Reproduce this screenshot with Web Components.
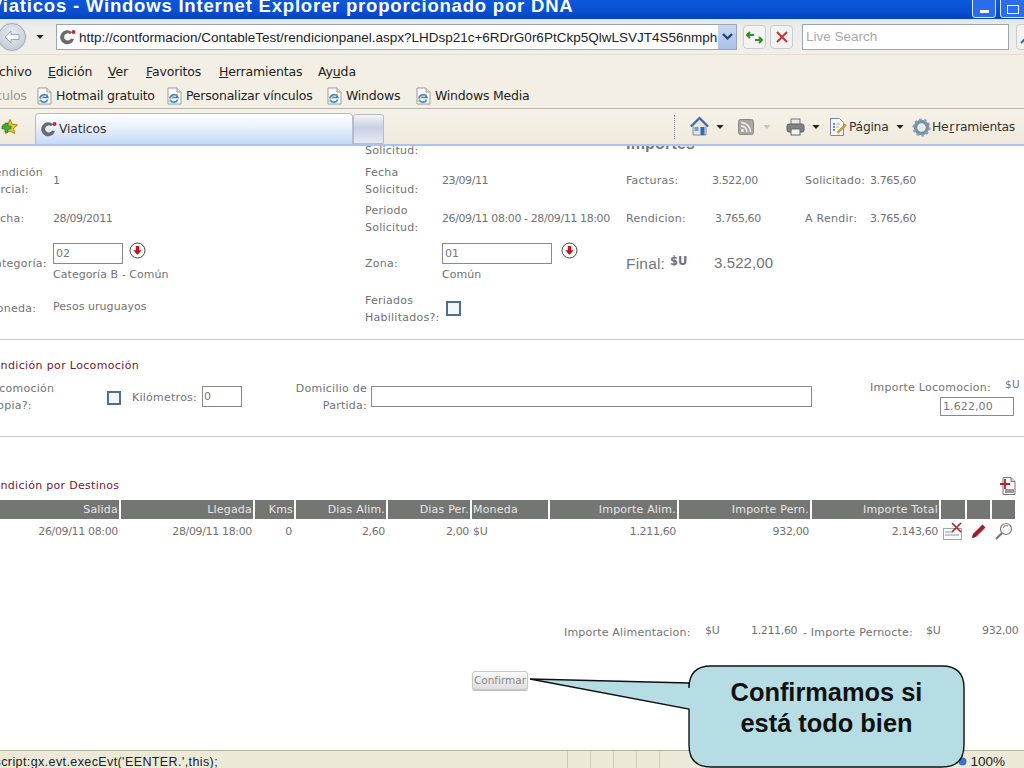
<!DOCTYPE html>
<html lang="es"><head><meta charset="utf-8"><title>Viaticos</title>
<style>
html,body{margin:0;padding:0;background:#fff}
body{width:1024px;height:768px;overflow:hidden;position:relative;display:flex;flex-direction:column;font-family:"DejaVu Sans",sans-serif}
page-main{flex:1;min-height:0}
</style></head><body>
<ie-titlebar></ie-titlebar>
<ie-addressbar></ie-addressbar>
<ie-menubar></ie-menubar>
<ie-linksbar></ie-linksbar>
<ie-tabbar></ie-tabbar>
<page-main>
  <rendicion-form></rendicion-form>
  <rendicion-loco></rendicion-loco>
  <rendicion-destinos></rendicion-destinos>
</page-main>
<ie-statusbar></ie-statusbar>
<callout-bubble>Confirmamos si<br>está todo bien</callout-bubble>
<script>
const ICONS={
 favicon:'<svg width="18" height="18" viewBox="0 0 18 18"><path d="M13 4.2A7 7 0 1 0 15 11l-3-.6A3.6 3.6 0 1 1 11 6.2z" fill="#6b6b6b"/><circle cx="14.5" cy="4" r="2" fill="#d8202a"/></svg>',
 ie:'<svg width="17" height="18" viewBox="0 0 17 18"><path d="M2 1h9l4 4v12H2z" fill="#fff" stroke="#9a9a9a"/><path d="M11 1v4h4" fill="#e6e6e6" stroke="#9a9a9a"/><path d="M4 11.5a4 4 0 0 1 7.8-1H6" fill="none" stroke="#2f7fd6" stroke-width="1.7"/><path d="M11.6 12.6A4 4 0 0 1 4.3 13" fill="none" stroke="#3a93e0" stroke-width="1.7"/><path d="M3 15c1-3 4-6 9-8" fill="none" stroke="#e8b020" stroke-width="1"/></svg>',
 drop:'<svg width="8" height="4" viewBox="0 0 9 5"><path d="M0 0h9L4.5 5z" fill="#222"/></svg>',
 arrowCircle:'<svg width="17" height="17" viewBox="0 0 17 17"><circle cx="8.5" cy="8.5" r="7.5" fill="#fff" stroke="#444" stroke-width="1"/><path d="M6.8 4h3.4v4.2h2.4L8.5 13 4.4 8.2h2.4z" fill="#c8101e"/></svg>',
 home:'<svg width="19" height="22" viewBox="0 0 19 22"><path d="M3 9.5V19h13V9.500L9.500 3z" fill="#e9e4d3" stroke="#7d8ea6"/><path d="M.8 10.500 9.500 2l8.700 8.500" fill="none" stroke="#3c67b4" stroke-width="2"/><rect x="10.500" y="11" width="4" height="8" fill="#2f69b8"/><rect x="4.500" y="11" width="4" height="4" fill="#6f9fd8"/></svg>',
 rss:'<svg width="16" height="16" viewBox="0 0 16 16"><rect x=".5" y=".5" width="15" height="15" rx="2" fill="#a8a8a0" stroke="#8a8a84"/><circle cx="4.500" cy="11.500" r="1.500" fill="#eee"/><path d="M3 7a6 6 0 0 1 6 6M3 3.500A9.500 9.500 0 0 1 12.500 13" fill="none" stroke="#eee" stroke-width="1.600"/></svg>',
 printer:'<svg width="19" height="18" viewBox="0 0 19 18"><rect x="5" y="1" width="9" height="6" fill="#e8e8e8" stroke="#777"/><rect x="1" y="6" width="17" height="8" rx="2" fill="#7f8386" stroke="#5c6064"/><rect x="5" y="11" width="9" height="6" fill="#f4f4f4" stroke="#666"/></svg>',
 page:'<svg width="18" height="20" viewBox="0 0 18 20"><path d="M1.500 1.500h9l4 4v13h-13z" fill="#f6f6f4" stroke="#7d8a9c"/><path d="M4 7h2M4 10h2M4 13h2" stroke="#3c70b8" stroke-width="1.500"/><path d="M7.500 7h3M7.500 10h2" stroke="#999"/><path d="M8 15 16 7l1.500 1.500-8 7.500z" fill="#d9a520" stroke="#8a7330" stroke-width=".5"/></svg>',
 gear:'<svg width="19" height="19" viewBox="0 0 19 19"><circle cx="9.500" cy="9.500" r="6" fill="none" stroke="#7b8ea4" stroke-width="3.500"/><circle cx="9.500" cy="9.500" r="8" fill="none" stroke="#8fa3ba" stroke-width="2.200" stroke-dasharray="2.600 2.400"/><circle cx="9.500" cy="9.500" r="3" fill="#dfe9f2"/></svg>',
 star:'<svg width="18" height="18" viewBox="0 0 18 18"><path d="M9 1.500l2.200 4.800 5.300.6-3.900 3.500 1 5.100L9 13l-4.600 2.500 1-5.100L1.500 6.900l5.300-.6z" fill="#f0c528" stroke="#a5831c"/><path d="M1 8h3V5h3v3h3v3H7v3H4v-3H1z" fill="#3cb43c" stroke="#1f7a1f" stroke-width=".7"/></svg>',
 del:'<svg width="21" height="19" viewBox="0 0 21 19"><rect x=".5" y="6.500" width="18" height="11" fill="#fafafa" stroke="#9aa"/><path d="M2 10h7M2 13h14" stroke="#8a9aa8"/><path d="M9 1l9 9M18 1l-9 9" stroke="#b0202c" stroke-width="1.600"/></svg>',
 pencil:'<svg width="16" height="16" viewBox="0 0 16 16"><path d="M1 15l1.200-4.200L11.500 1.500l3 3L5.200 13.800z" fill="#a8192b"/><path d="M1 15l1.200-4.200 3 3z" fill="#6a3030"/></svg>',
 zoom:'<svg width="19" height="19" viewBox="0 0 19 19"><circle cx="12" cy="7" r="5.500" fill="#fff" stroke="#777" stroke-width="1.200"/><path d="M9 6a3.500 3.500 0 0 1 5-2" fill="none" stroke="#b04040"/><path d="M8 11l-6 6" stroke="#777" stroke-width="2.200"/></svg>',
 add:'<svg width="16" height="18" viewBox="0 0 16 18"><path d="M3 .5h8l4 4v13H3z" fill="#fafafa" stroke="#777"/><path d="M11 .5v4h4" fill="#ddd" stroke="#777"/><rect x="5" y="12" width="9" height="4" fill="#999"/><path d="M0 7h10M5 2v10" stroke="#b3202e" stroke-width="1.800"/></svg>'
};
function def(name,html){
  customElements.define(name,class extends HTMLElement{
    constructor(){super();const r=this.attachShadow({mode:'open'});
      r.innerHTML=html.replace(/\{\{(\w+)\}\}/g,(m,k)=>ICONS[k]||'');}
  });
}
def('ie-titlebar',`<style>
:host{display:flex;height:19px;flex:none;overflow:hidden;background:linear-gradient(#0a58dc,#0a4fd0 60%,#0042bf);position:relative}
.t{margin:-3px 0 0 -10px;font:bold 18.500px/18px "Liberation Sans",sans-serif;color:#fff;white-space:nowrap;letter-spacing:.8px;flex:1}
.b{flex:none;height:23px;margin:-5px 4px 0 0;border:1px solid #dfe8fa;border-radius:3px;background:#2a6cec;box-sizing:border-box;display:flex;align-items:flex-end;justify-content:center}
.min{width:9px;height:3px;background:#fff;margin-bottom:4px}
.max{width:10px;height:7px;border:1.500px solid #fff;margin-bottom:3px}
</style><div class="t">Viaticos - Windows Internet Explorer proporcionado por DNA</div><div class="b" style="width:24px"><div class="min"></div></div><div class="b" style="width:30px;margin-right:-6px;justify-content:flex-start;padding-left:6px"><div class="max"></div></div>`);
def('ie-addressbar',`<style>
:host{display:flex;align-items:center;flex:none;height:36px;background:linear-gradient(#e3e6e8,#eeedea 30%,#f1efe8);box-sizing:border-box;border-bottom:1px solid #e3dfd0;font:13.500px "Liberation Sans",sans-serif;overflow:hidden;padding-top:1px}
.back{flex:none;margin-left:-2px;width:26px;height:26px;border-radius:50%;border:1px solid #a4acb8;background:radial-gradient(circle at 50% 35%,#e8ecf0,#b9c4d0);display:flex;align-items:center;justify-content:center;box-shadow:0 0 0 1px #dfe3e8}
.drop{margin:0 0 0 10px;width:9px;display:flex}
.addr{flex:none;margin-left:12px;width:681px;height:26px;box-sizing:border-box;border:1px solid #9aa7b0;background:#fff;display:flex;align-items:center;padding-left:2px;color:#222;white-space:nowrap;position:relative;overflow:hidden}
.u{margin-left:2px;flex:1;overflow:hidden}
.dd{flex:none;width:18px;height:24px;background:linear-gradient(#c9d8f2,#a9c1ea);display:flex;align-items:center;justify-content:center}
.btn{flex:none;width:23px;height:24px;box-sizing:border-box;border:1px solid #c8cbd0;border-radius:4px;background:#f3f3f0;display:flex;align-items:center;justify-content:center}
.s{flex:none;margin-left:9px;width:207px;height:26px;box-sizing:border-box;border:1px solid #9aa7b0;background:#fff;color:#aaa;padding-left:3px;line-height:24px}
.go{flex:none;margin-left:7px;width:20px;height:24px;border:1px solid #c8cbd0;border-radius:4px;background:#f3f3f0;display:flex;align-items:center;justify-content:center}
</style><div class="back"><svg width="16" height="14" viewBox="0 0 16 14"><path d="M1 7l6-6v3.500h8v5H7V13z" fill="#f4f6f8" stroke="#9aa6b2"/></svg></div><div class="drop">{{drop}}</div>
<div class="addr">{{favicon}}<span class="u">http://contformacion/ContableTest/rendicionpanel.aspx?LHDsp21c+6RDrG0r6PtCkp5QlwLSVJT4S56nmph</span><div class="dd"><svg width="11" height="8" viewBox="0 0 11 8"><path d="M1 1l4.500 4.500L10 1" fill="none" stroke="#1f3f7a" stroke-width="2.200"/></svg></div></div>
<div class="btn" style="margin-left:6px"><svg width="17" height="15" viewBox="0 0 17 15"><path d="M1 5h7M4 2L1 5l3 3M16 10H9M13 7l3 3-3 3" fill="none" stroke="#2f8f2f" stroke-width="2"/></svg></div>
<div class="btn" style="margin-left:4px"><svg width="12" height="12" viewBox="0 0 12 12"><path d="M1 1l10 10M11 1L1 11" stroke="#c8303a" stroke-width="2"/></svg></div>
<div class="s">Live Search</div>
<div class="go"><svg width="14" height="14" viewBox="0 0 14 14"><circle cx="9" cy="5" r="3.500" fill="none" stroke="#2f69b8" stroke-width="1.800"/><path d="M6 8l-5 5" stroke="#2f69b8" stroke-width="2"/></svg></div>`);
def('ie-menubar',`<style>
:host{display:grid;flex:none;height:28px;align-items:center;background:#f3efe5;font:12.500px "DejaVu Sans",sans-serif;color:#222;margin:0;padding:4px 0 0 0;box-sizing:border-box;overflow:hidden;grid-template-columns:62px 60px 38px 73px 99px auto;margin-left:-14px;letter-spacing:-.15px}
u{text-underline-offset:1px}
</style><span>Archivo</span><span><u>E</u>dición</span><span><u>V</u>er</span><span><u>F</u>avoritos</span><span><u>H</u>erramientas</span><span>Ay<u>u</u>da</span>`);
def('ie-linksbar',`<style>
:host{display:flex;flex:none;height:25px;align-items:center;background:#f3efe5;border-bottom:1px solid #b8b6ac;box-sizing:content-box;font:12.500px "DejaVu Sans",sans-serif;color:#222;overflow:hidden;letter-spacing:-.22px}
.g{color:#999;margin-left:-24px;flex:none;width:60px}
.i{display:flex;align-items:center;gap:3px;flex:none}
</style><span class="g">Vínculos</span><span class="i" style="width:130px">{{ie}}Hotmail gratuito</span><span class="i" style="width:160px">{{ie}}Personalizar vínculos</span><span class="i" style="width:89px">{{ie}}Windows</span><span class="i">{{ie}}Windows Media</span>`);
def('ie-tabbar',`<style>
:host{display:flex;flex:none;height:37px;box-sizing:border-box;background:linear-gradient(#f6f2e8,#efeadc);border-bottom:2px solid #a9c4ee;font:12.300px "DejaVu Sans",sans-serif;color:#333;overflow:hidden;letter-spacing:-.1px}
.star{flex:none;margin:9px 0 0 1px;width:34px}
.tab{flex:none;width:318px;margin-top:4px;box-sizing:border-box;border:1px solid #b4bcc8;border-bottom:0;border-radius:4px 4px 0 0;background:linear-gradient(#fff,#eef4fc 35%,#c6daf7);display:flex;align-items:center;gap:1px;padding:0 0 0 4px}
.new{flex:none;width:31px;margin-top:5px;box-sizing:border-box;border:1px solid #b8bcc4;border-radius:3px 3px 0 0;background:linear-gradient(#f3f3f6,#c9cfe4 45%,#e6e9f2)}
.sp{flex:1}
.r{flex:none;display:flex;align-items:center;height:100%;margin-right:-12px;color:#333;padding-top:1px;box-sizing:border-box;letter-spacing:-.25px}
.sep{width:0;height:24px;border-left:1px dotted #888;margin-right:15px}
.r>span{display:flex;align-items:center;flex:none}
</style><div class="star">{{star}}</div><div class="tab">{{favicon}}Viaticos</div><div class="new"></div><div class="sp"></div>
<div class="r"><div class="sep"></div><span style="width:26px">{{home}}</span><span style="width:22px">{{drop}}</span><span style="width:25px">{{rss}}</span><span style="width:23px;opacity:.2">{{drop}}</span><span style="width:26px">{{printer}}</span><span style="width:17px">{{drop}}</span><span style="width:67px;gap:2px">{{page}}Página</span><span style="width:16px">{{drop}}</span><span style="width:108px;gap:1px">{{gear}}He<u>r</u>ramientas</span><span style="width:16px;justify-content:flex-end">{{drop}}</span></div>`);
def('rendicion-form',`<style>
:host{display:grid;margin:-10px 0 0 -13px;height:203px;grid-template-columns:66px 312px 77px 184px 86px 93px 65px auto;grid-template-rows:25px 40px 36px 52px 37px;font:11px/17px "DejaVu Sans",sans-serif;color:#727272;border-bottom:1px solid #c9c9bd;box-sizing:content-box;white-space:nowrap;letter-spacing:.25px}
.c{align-self:center}
.m{margin-top:-2px}
.e{align-self:end;margin-bottom:2px}
.n{letter-spacing:-.4px}
h3{margin:0 0 11px;font:bold 16px/16px "Liberation Sans",sans-serif;color:#777;align-self:end;height:14px;letter-spacing:.2px}
input{font:11px "DejaVu Sans",sans-serif;color:#777;box-sizing:border-box;width:70px;height:21px;border:1px solid #8a8a8a;padding:0 2px;margin:0;display:block;background:#fff}
.sel{align-self:start;padding-top:6px;line-height:17px;letter-spacing:.05px}
.row{display:flex;gap:6px;margin-bottom:2px}
.row svg{display:block;margin-top:-1px}
.cb{width:15px;height:15px;box-sizing:border-box;border:2px solid #4a6f8f;background:#f3f5f8;margin:2px 0 0 4px}
.fin{font:15.500px "Liberation Sans",sans-serif;color:#777;margin-top:2px;letter-spacing:.2px}
.big{font:15px "Liberation Sans",sans-serif;position:relative;letter-spacing:.1px;margin-top:-2px;padding-left:2px}
.big b{font:bold 11.500px "DejaVu Sans",sans-serif;position:absolute;left:-42px;top:0}
</style>
<span></span><span></span><span class="e">Solicitud:</span><span></span><h3>Importes</h3><span></span><span></span><span></span>
<span class="c">Rendición<br>Parcial:</span><span class="c m">1</span><span class="c">Fecha<br>Solicitud:</span><span class="c n m">23/09/11</span><span class="c m">Facturas:</span><span class="c n m">3.522,00</span><span class="c m">Solicitado:</span><span class="c n m">3.765,60</span>
<span class="c m">Fecha:</span><span class="c n m">28/09/2011</span><span class="c">Periodo<br>Solicitud:</span><span class="c n m">26/09/11 08:00 - 28/09/11 18:00</span><span class="c m">Rendicion:</span><span class="c n m" style="padding-left:3px">3.765,60</span><span class="c m">A Rendir:</span><span class="c n m">3.765,60</span>
<span class="c">Categoría:</span><div class="sel"><div class="row"><input value="02" aria-label="Categoría">{{arrowCircle}}</div>Categoría B - Común</div><span class="c">Zona:</span><div class="sel"><div class="row" style="gap:9px"><input style="width:110px" value="01" aria-label="Zona">{{arrowCircle}}</div>Común</div><span class="c fin">Final:</span><span class="c big"><b>$U</b>3.522,00</span><span></span><span></span>
<span class="c" style="margin-top:1px">Moneda:</span><span class="c" style="margin-top:-2px;letter-spacing:.05px">Pesos uruguayos</span><span class="c" style="margin-top:3px">Feriados<br>Habilitados?:</span><span class="c"><div class="cb"></div></span><span></span><span></span><span></span><span></span>`);
def('rendicion-loco',`<style>
:host{display:block;height:97px;box-sizing:border-box;padding-top:17px;font:11px/17px "DejaVu Sans",sans-serif;color:#727272;border-bottom:1px solid #c9c9bd;white-space:nowrap;letter-spacing:.25px}
h4{margin:0 0 6px -14px;font:11px/17px "DejaVu Sans",sans-serif;color:#6f1730;height:17px;letter-spacing:.35px}
.r{display:flex;align-items:flex-start;margin-left:-14px}
.a{width:121px;flex:none}
.cb{width:14px;height:14px;box-sizing:border-box;border:2px solid #4a6f8f;background:#f3f5f8;flex:none;margin:11px 11px 0 0}
.k{flex:none;width:70px;margin-top:9px}
input{font:11px "DejaVu Sans",sans-serif;color:#777;box-sizing:border-box;height:21px;border:1px solid #8a8a8a;padding:0 1px;margin:6px 0 0 0;background:#fff;flex:none}
.d{flex:none;width:73px;margin-left:52px;text-align:right;margin-right:4px}
.imp{flex:none;margin-left:58px;width:147px;position:relative}
.imp div{margin-top:-1px}
.su{position:absolute;left:135px;top:-4px;font-size:10.500px}
.imp input{position:absolute;left:70px;top:17px;margin:0;width:74px;height:19px;padding:0 2px;letter-spacing:.1px}
</style><h4>Rendición por Locomoción</h4><div class="r"><div class="a">Locomoción<br>Propia?:</div><div class="cb"></div><div class="k">Kilómetros:</div><input style="width:40px" value="0" aria-label="Kilómetros"><div class="d">Domicilio de<br>Partida:</div><input style="width:441px" aria-label="Domicilio"><div class="imp"><div>Importe Locomocion:</div><span class="su">$U</span><input value="1.622,00" aria-label="Importe"></div></div>`);
def('rendicion-destinos',`<style>
:host{display:block;padding-top:40px;font:11px/17px "DejaVu Sans",sans-serif;color:#727272;white-space:nowrap;letter-spacing:-.35px}
.top{display:flex;height:23px;justify-content:space-between;padding-right:8px;margin-left:-14px}
.top span{color:#6f1730;letter-spacing:.3px}
.top svg{display:block}
.g{display:grid;grid-template-columns:119px 132px 39px 90px 82px 76px 127px 131px 127px 24px 23px 23px;column-gap:2px}
.h{background:#747674;color:#e6e6e4;height:19px;line-height:20px;text-align:right;padding-right:1px;box-sizing:border-box;letter-spacing:.2px}
.v{height:24px;line-height:26px;text-align:right;padding-right:1px}
.l{text-align:left;padding-left:1px}
.ic{padding:0;text-align:center;display:flex;align-items:center;justify-content:center}
.s{display:flex;margin:81px 0 0 564px;line-height:17px}
.s .lb{letter-spacing:.2px}
.s .up{margin-top:-2px}
.c{margin:30px 0 0 472px;width:56px;height:19px;box-sizing:border-box;border:1px solid #c6c6c6;border-radius:3px;background:linear-gradient(#fbfbfb,#dedede);text-align:center;line-height:17px;font-size:10.500px;color:#888;box-shadow:0 1px 1px #bbb;letter-spacing:0}
</style><div class="top"><span>Rendición por Destinos</span>{{add}}</div>
<div class="g"><div class="h">Salida</div><div class="h">Llegada</div><div class="h">Kms</div><div class="h">Dias Alim.</div><div class="h">Dias Per.</div><div class="h l">Moneda</div><div class="h">Importe Alim.</div><div class="h">Importe Pern.</div><div class="h">Importe Total</div><div class="h"></div><div class="h"></div><div class="h"></div>
<div class="v">26/09/11 08:00</div><div class="v">28/09/11 18:00</div><div class="v" style="padding-right:2px">0</div><div class="v">2,60</div><div class="v">2,00</div><div class="v l">$U</div><div class="v">1.211,60</div><div class="v">932,00</div><div class="v">2.143,60</div><div class="v ic">{{del}}</div><div class="v ic">{{pencil}}</div><div class="v ic">{{zoom}}</div></div>
<div class="s"><span class="lb" style="width:141px">Importe Alimentacion:</span><span class="up" style="width:46px">$U</span><span class="up" style="width:52px">1.211,60</span><span class="lb" style="width:123px">- Importe Pernocte:</span><span class="up" style="width:56px">$U</span><span class="up">932,00</span></div>
<div class="c">Confirmar</div>`);
def('ie-statusbar',`<style>
:host{display:flex;flex:none;height:18px;background:#ece9d8;border-top:1px solid #b5b2a2;box-sizing:border-box;font:12.500px/17px "Liberation Sans",sans-serif;color:#222;overflow:hidden}
.t{flex:none;width:597px;margin-left:-30px;padding-top:3px;white-space:nowrap;letter-spacing:.4px}
.p{flex:none;width:22px;border-left:1px solid #cfccbc}
.z{margin-left:auto;padding:3px 19px 0 0;font-size:13.500px;display:flex;align-items:center;gap:3px}
</style><div class="t">javascript:gx.evt.execEvt('EENTER.',this);</div><div class="p"></div><div class="p"></div><div class="p"></div><div class="p"></div><div class="p"></div><div class="z"><svg width="9" height="9" viewBox="0 0 9 9"><circle cx="4.500" cy="4.500" r="4" fill="#3a76c0"/></svg>100%</div>`);
def('callout-bubble',`<style>
:host{position:absolute;left:0;top:0;width:1024px;height:768px;pointer-events:none;display:block}
svg{position:absolute;left:0;top:0}
.t{position:absolute;left:689px;top:677px;width:275px;text-align:center;font:bold 25.400px/31px "Liberation Sans",sans-serif;color:#111}
</style><svg width="1024" height="768"><path d="M711 666H942Q964 666 964 688V745Q964 767 942 767H711Q689 767 689 745V709L530 679L689 683V688Q689 666 711 666Z" fill="#b7dde4" stroke="#111" stroke-width="1.400"/></svg><div class="t"><slot></slot></div>`);
def('page-main',`<style>:host{display:block;overflow:hidden;background:#fff}</style><slot></slot>`);
</script>
</body></html>
